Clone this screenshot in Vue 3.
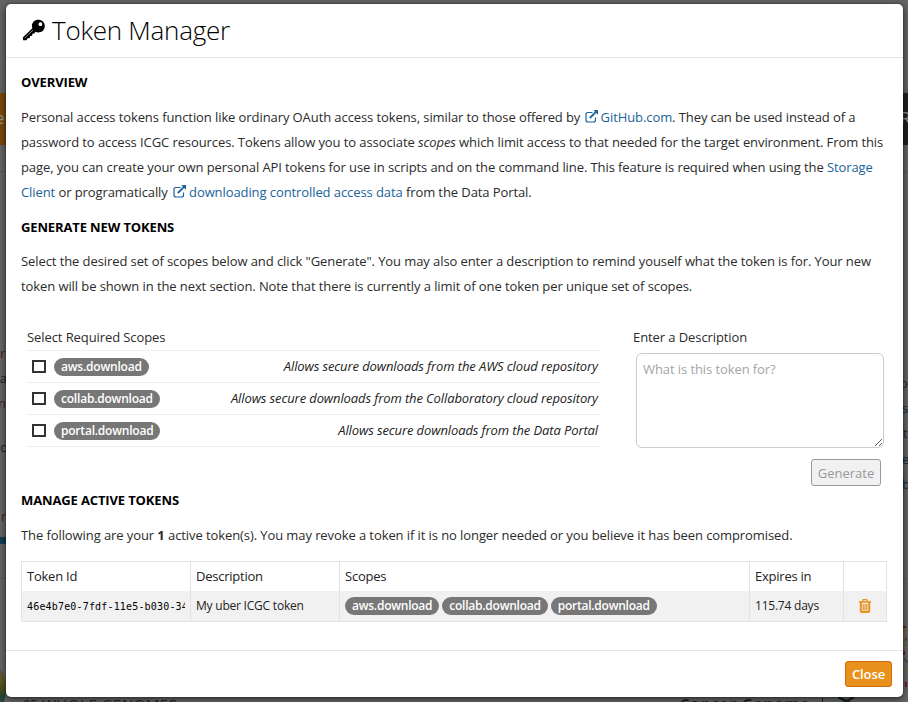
<script setup>
const scopes = [
  { name: 'aws.download', text: 'Allows secure downloads from the AWS cloud repository' },
  { name: 'collab.download', text: 'Allows secure downloads from the Collaboratory cloud repository' },
  { name: 'portal.download', text: 'Allows secure downloads from the Data Portal' },
]
</script>

<template>
  <div class="page">
    <div class="behind">
      <div class="bar orange">e</div>
      <div class="bar dark">R</div>
      <div class="rule r1"></div>
      <div class="rule r2"></div>
      <span class="bt red l1">r</span>
      <span class="bt l2">pa</span>
      <span class="bt red l3">n</span>
      <span class="bt l4">ro</span>
      <span class="bt red l5">r</span>
      <i class="chip"></i>
      <i class="swirl"></i>
      <span class="bt blue q1">ol</span>
      <span class="bt blue q2">s</span>
      <span class="bt blue q3">t</span>
      <span class="bt blue q4">e</span>
      <span class="bt blue q5">b</span>
      <svg class="dots" width="6" height="80" viewBox="0 0 6 80">
        <g fill="#701c20"><path d="M1 4h3v2H1zM3 15l2 3-2 1zM1 29h2v4H1zM3 60h2v5H3z" /></g>
        <g fill="#73651f"><path d="M2 8h2v4H2zM1 22h3v2H1zM3 48h2v3H3z" /></g>
        <path d="M2 37q3 0 3 4" stroke="#173e54" fill="none" />
      </svg>
      <span class="bt b1">95</span>
      <span class="bt b2">WHOLE GENOMES</span>
      <span class="bt b3">Cancer Genome</span>
      <i class="tick"></i>
      <svg class="cross" width="20" height="8" viewBox="0 0 20 8"><path d="M0 0L16 8M16 0L2 8" stroke="#18232b" stroke-width="2.5" /></svg>
    </div>

    <section class="modal">
      <header>
        <svg class="key" width="24" height="23" viewBox="0 0 24 23">
          <path fill-rule="evenodd" d="M16.3 .8c3.8 0 6.5 2.6 6.5 6.1 0 3.700-2.900 6.500-6.600 6.500-1 0-2-.2-2.800-.6l-1.100 1.600-1.900.3-.3 2-2 .3-.4 1.900-2 .4-1.300 1.900H1.200L.8 18.400 10.400 9.200c-.3-.8-.5-1.500-.5-2.300C9.900 3.400 12.700.8 16.300.8zM18.400 3.300a1.900 1.900 0 1 0 0 3.800 1.900 1.900 0 0 0 0-3.800z" fill="#000" />
          <path d="M2.800 19L11 11" stroke="#aaa" stroke-width=".8" />
        </svg>
        <h1>Token Manager</h1>
      </header>

      <main>
        <h2>Overview</h2>
        <p class="first">
          <span class="line">Personal access tokens function like ordinary OAuth access tokens, similar to those offered by <a><svg class="ext" width="14" height="13" viewBox="0 0 14 13"><path d="M7.500 2.500H3Q1 2.500 1 4.500V10Q1 12 3 12H8.500Q10.500 12 10.500 10V7.500" fill="none" stroke="currentColor" stroke-width="1.200" /><path d="M4.800 8L11 1.800" stroke="currentColor" stroke-width="1.800" /><path d="M8.300 0H13V4.700z" fill="currentColor" /></svg>GitHub.com</a>. They can be used instead of a</span>
          <span class="line">password to access ICGC resources. Tokens allow you to associate <em>scopes</em> which limit access to that needed for the target environment. From this</span>
          <span class="line">page, you can create your own personal API tokens for use in scripts and on the command line. This feature is required when using the <a>Storage</a></span>
          <span class="line"><a>Client</a> or programatically <a><svg class="ext wide" width="14" height="13" viewBox="0 0 14 13"><path d="M7.500 2.500H3Q1 2.500 1 4.500V10Q1 12 3 12H8.500Q10.500 12 10.500 10V7.500" fill="none" stroke="currentColor" stroke-width="1.200" /><path d="M4.800 8L11 1.800" stroke="currentColor" stroke-width="1.800" /><path d="M8.300 0H13V4.700z" fill="currentColor" /></svg>downloading controlled access data</a> from the Data Portal.</span>
        </p>

        <h2>Generate new tokens</h2>
        <p class="second">
          <span class="line">Select the desired set of scopes below and click "Generate". You may also enter a description to remind youself what the token is for. Your new</span>
          <span class="line">token will be shown in the next section. Note that there is currently a limit of one token per unique set of scopes.</span>
        </p>

        <div class="form">
          <div class="scopes">
            <div class="label">Select Required Scopes</div>
            <div v-for="s in scopes" :key="s.name" class="scope">
              <i class="box"></i>
              <span class="badge">{{ s.name }}</span>
              <em>{{ s.text }}</em>
            </div>
          </div>
          <div class="desc">
            <div class="label">Enter a Description</div>
            <textarea placeholder="What is this token for?"></textarea>
            <button class="generate" disabled>Generate</button>
          </div>
        </div>

        <h2>Manage active tokens</h2>
        <p class="third">
          <span class="line">The following are your <b>1</b> active token(s). You may revoke a token if it is no longer needed or you believe it has been compromised.</span>
        </p>

        <div class="table">
          <div class="cell">Token Id</div>
          <div class="cell">Description</div>
          <div class="cell">Scopes</div>
          <div class="cell">Expires in</div>
          <div class="cell"></div>
          <div class="cell odd"><code>46e4b7e0-7fdf-11e5-b030-34</code></div>
          <div class="cell odd">My uber ICGC token</div>
          <div class="cell odd badges"><span v-for="s in scopes" :key="s.name" class="badge">{{ s.name }}</span></div>
          <div class="cell odd">115.74 days</div>
          <div class="cell odd center">
            <svg width="12" height="14" viewBox="0 0 12 14">
              <path d="M3.700 2.500V1.600Q3.700.7 4.600.7H7.400Q8.300.7 8.300 1.600V2.500" fill="none" stroke="#e8921d" stroke-width="1.300" />
              <path d="M0 2.200H12V3.800H0z" fill="#e8921d" />
              <path d="M1.800 3V12Q1.800 13 2.900 13H9.100Q10.200 13 10.200 12V3" fill="none" stroke="#e8921d" stroke-width="2" />
              <path d="M4.200 5V11.500M6 5V11.500M7.800 5V11.500" stroke="#e8921d" stroke-width="1.200" />
            </svg>
          </div>
        </div>
      </main>

      <footer><button class="close">Close</button></footer>
    </section>
  </div>
</template>

<style>
body { margin: 0; overflow: hidden; }
</style>

<style scoped>
* { box-sizing: border-box; }
.page {
  position: relative;
  width: 908px;
  height: 702px;
  padding: 4px 5px 4px 6px;
  overflow: hidden;
  background: #666;
  font: 13px/25px "Open Sans", "Noto Sans", sans-serif;
  letter-spacing: -.088px;
  color: #2b2b2b;
}
.behind, .behind > * { position: absolute; }
.behind { inset: 0; overflow: hidden; }
.bar { top: 93px; height: 52px; line-height: 50px; font-size: 17px; color: #999; }
.orange { left: 0; width: 20px; background: #7a4a0c; text-indent: -5px; }
.dark { right: 0; width: 8px; background: #222; text-indent: 0; overflow: hidden; }
.rule { left: 0; right: 0; height: 1px; background: #595959; }
.r1 { top: 171px; }
.r2 { top: 578px; }
.bt { line-height: 20px; color: #222; white-space: nowrap; }
.red { color: #4d1c12; }
.blue { color: #102c44; }
.l1 { left: 0; top: 343px; }
.l2 { left: -8px; top: 368px; }
.l3 { left: -2px; top: 393px; }
.l4 { left: -5px; top: 437px; }
.l5 { left: 1px; top: 506px; }
.chip { left: 0; top: 537px; width: 6px; height: 7px; background: #123e57; }
.swirl { left: -18px; top: 665px; width: 24px; height: 48px; border-radius: 50%; background: linear-gradient(#665b48, #5b5620 40%, #28472d 65%, #264663); }
.q1 { left: 900px; top: 373px; }
.q2 { left: 902px; top: 398px; }
.q3 { left: 903px; top: 423px; }
.q4 { left: 902px; top: 449px; }
.q5 { left: 902px; top: 474px; }
.dots { left: 902px; top: 622px; }
.b1 { left: 23px; top: 694px; }
.b2 { left: 42px; top: 694px; font-size: 15px; letter-spacing: .5px; }
.b3 { left: 680px; top: 693px; font-size: 15px; letter-spacing: .9px; font-weight: 700; color: #18232b; }
.tick { left: 822px; top: 698px; width: 1px; height: 4px; background: #222; }
.cross { left: 838px; top: 697px; }

.modal {
  position: relative;
  display: flex;
  flex-direction: column;
  height: 693px;
  background: #fff;
  border-radius: 5px;
  box-shadow: 0 2px 8px rgba(0, 0, 0, .6), 0 0 2px rgba(0, 0, 0, .5);
}
header {
  display: flex;
  align-items: center;
  gap: 6px;
  height: 54px;
  padding: 0 16px;
  border-bottom: 1px solid #e5e5e5;
}
h1 { margin: 0; padding-bottom: 2px; font-size: 26px; line-height: 50px; font-weight: 300; letter-spacing: -.25px; color: #000; white-space: nowrap; }
main { flex: 1; padding: 14px 15px 0; }
h2 { margin: 0; font-size: 13px; line-height: 20px; font-weight: 700; letter-spacing: -.13px; text-transform: uppercase; color: #000; }
p { margin: 0; }
.first { padding: 13px 0 12px; }
.second { padding: 12px 0 0; }
.third { padding: 13px 0; }
.line { display: block; height: 25px; white-space: nowrap; }
a { color: #1a639b; }
.ext { margin: 0 2px 0 1px; vertical-align: -1px; }
.wide { margin-left: 2px; }
.form { display: flex; height: 191px; padding: 28px 0 0 6px; }
.scopes { width: 574px; margin-right: 32px; }
.label { height: 23px; line-height: 21px; }
.scope { display: flex; align-items: center; height: 32px; padding: 0 3px 0 5px; border-top: 1px solid #eee; }
.scope:last-child { height: 33px; border-bottom: 1px solid #eee; }
.scope em { margin-left: auto; white-space: nowrap; letter-spacing: -.11px; color: #222; }
.box { width: 14px; height: 13px; margin-right: 8px; border: 2px solid #333; }
.badge {
  display: block;
  height: 18px;
  padding: 0 7px;
  border-radius: 9px;
  background: #777;
  color: #fff;
  font-size: 12px;
  font-weight: 600;
  line-height: 17px;
  letter-spacing: -.21px;
  white-space: nowrap;
}
.desc { display: flex; flex-direction: column; width: 252px; }
textarea {
  display: block;
  width: 248px;
  height: 95px;
  margin: 3px 0 0 3px;
  padding: 5px 6px;
  border: 1px solid #ccc;
  border-radius: 6px;
  font: 13px/20px "Open Sans", sans-serif;
  letter-spacing: -.086px;
  resize: both;
}
textarea::placeholder { color: #a5a5a5; }
button { padding: 0; border-radius: 3px; font: 13px/24px "Open Sans", sans-serif; }
.generate { align-self: flex-end; width: 70px; height: 27px; margin: 11px 4px 0 0; border: 1px solid #999; background: #f1f1f1; color: #999; }
.table {
  display: grid;
  grid-template-columns: 169px 149px 410px 94px 43px;
  grid-template-rows: 29px 31px;
  width: 866px;
  border: 1px solid #e2e2e2;
  border-width: 1px 0 0 1px;
}
.cell { padding: 0 5px; line-height: 29px; border-right: 1px solid #e2e2e2; white-space: nowrap; overflow: hidden; letter-spacing: -.24px; color: #222; }
.odd { background: #f1f1f1; border-bottom: 1px solid #e2e2e2; font-size: 12px; letter-spacing: -.22px; }
code { display: block; overflow: hidden; font: 10px/32px "DejaVu Sans Mono", monospace; letter-spacing: .17px; color: #000; }
.badges { display: flex; align-items: center; gap: 3px; }
.badges .badge { letter-spacing: -.24px; }
.center { display: flex; align-items: center; justify-content: center; }
footer { display: flex; justify-content: flex-end; height: 47px; padding: 10px 11px 0; border-top: 1px solid #e5e5e5; }
.close { width: 47px; height: 26px; border: 1px solid #cf6b0d; background: #e8921d; color: #fff; font-weight: 600; letter-spacing: -.1px; }
</style>
